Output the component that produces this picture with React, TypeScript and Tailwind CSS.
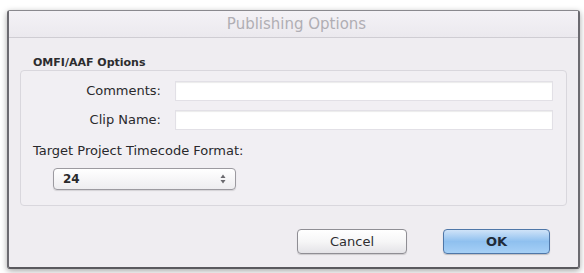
export default function App() {
  return (
    <div className="h-[273px] w-[584px] overflow-hidden bg-white pl-[7px] pt-[10px] [font-family:'DejaVu_Sans',sans-serif]">
      {/* Dialog window */}
      <div className="flex h-[259px] w-[573px] flex-col rounded-[3px] border-x-2 border-b-2 border-t border-x-[#6b6a70] border-b-[#5a595e] border-t-[#8a898e] bg-[#efedf1] shadow-[0_2px_6px_rgba(0,0,0,0.35)]">
        {/* Title bar */}
        <div className="flex h-[27px] items-center justify-center border-b border-[#cfcdd3] bg-gradient-to-b from-[#f4f2f6] to-[#ebe9ee] pl-[6px] text-[15px] text-[#b0aeb4]">
          Publishing Options
        </div>

        <div className="flex flex-1 flex-col px-[11px]">
          <div className="mt-[17px] flex">
            <div className="w-[13px] shrink-0" />
            <div className="text-[11px] font-bold leading-[15px] text-[#2c2c2e]">OMFI/AAF Options</div>
          </div>

          {/* Group box */}
          <div className="flex h-[136px] flex-col rounded-[4px] border border-[#d9d7dd] bg-[#f1eff3] pb-[12px] pl-[32px] pr-[13px] pt-[10px]">
            <div className="flex items-center">
              <div className="w-[122px] pr-[14px] text-right text-[13px] text-[#29292c]">Comments:</div>
              <div className="h-[20px] flex-1 border border-[#e2e0e6] bg-white shadow-[inset_0_1px_1px_rgba(0,0,0,0.08)]" />
            </div>
            <div className="mt-[9px] flex items-center">
              <div className="w-[122px] pr-[14px] text-right text-[13px] text-[#29292c]">Clip Name:</div>
              <div className="h-[20px] flex-1 border border-[#e2e0e6] bg-white shadow-[inset_0_1px_1px_rgba(0,0,0,0.08)]" />
            </div>
            <div className="-ml-[20px] mt-[13px] text-[13px] leading-[16px] text-[#29292c]">Target Project Timecode Format:</div>
            <div className="mt-[9px] flex h-[22px] w-[183px] items-center justify-between rounded-[4px] border border-[#9c9aa0] bg-gradient-to-b from-white to-[#eeedf0] pl-[9px] pr-[9px] shadow-[0_1px_1px_rgba(0,0,0,0.12)]">
              <span className="text-[12px] font-bold text-[#2a2a2c]">24</span>
              <svg width="6" height="10" viewBox="0 0 6 10" className="text-[#6a696e]">
                <path d="M3 0.5 L5.5 4 H0.5 Z" fill="currentColor" />
                <path d="M3 9.5 L5.5 6 H0.5 Z" fill="currentColor" />
              </svg>
            </div>
          </div>

          {/* Buttons */}
          <div className="mt-[23px] flex justify-end gap-[36px] pr-[17px]">
            <button
              type="button"
              className="flex h-[25px] w-[110px] items-center justify-center rounded-[4px] border border-[#8f8e94] bg-gradient-to-b from-white via-[#f6f6f7] to-[#e4e3e7] text-[13px] text-[#2e2e30] shadow-[0_1px_1px_rgba(0,0,0,0.15)]"
            >
              Cancel
            </button>
            <button
              type="button"
              className="flex h-[25px] w-[107px] items-center justify-center rounded-[4px] border border-[#4f77a8] bg-gradient-to-b from-[#cfe3f8] via-[#8fc0ef] to-[#a6d0f6] text-[13px] font-bold text-[#1f2b3a] shadow-[0_1px_1px_rgba(0,0,0,0.2)]"
            >
              OK
            </button>
          </div>
        </div>
      </div>
    </div>
  );
}
